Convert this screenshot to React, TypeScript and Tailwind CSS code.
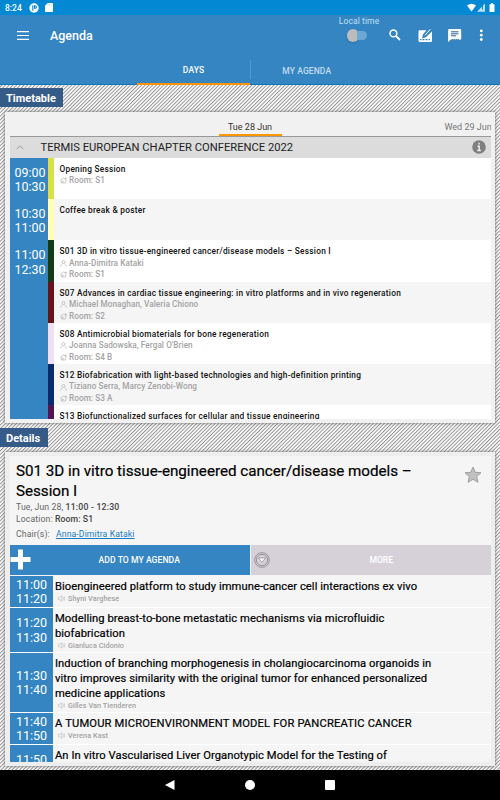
import type { ReactNode } from 'react'

type Session = {
  title: string
  color: string
  time?: [string, string]
  people?: string
  room?: string
}

type Talk = {
  time: [string, string]
  lines: string[]
  speaker?: string
  height: string
  tracking?: string
}

const sessions: Session[] = [
  { title: 'Opening Session', color: 'bg-[#d9e04d]', time: ['09:00', '10:30'], room: 'S1' },
  { title: 'Coffee break & poster', color: 'bg-[#ffffb8]', time: ['10:30', '11:00'] },
  {
    title: 'S01 3D in vitro tissue-engineered cancer/disease models – Session I',
    color: 'bg-[#163c17]',
    time: ['11:00', '12:30'],
    people: 'Anna-Dimitra Kataki',
    room: 'S1',
  },
  {
    title: 'S07 Advances in cardiac tissue engineering: in vitro platforms and in vivo regeneration',
    color: 'bg-[#65131d]',
    people: 'Michael Monaghan, Valeria Chiono',
    room: 'S2',
  },
  {
    title: 'S08 Antimicrobial biomaterials for bone regeneration',
    color: 'bg-[#efdff2]',
    people: "Joanna Sadowska, Fergal O'Brien",
    room: 'S4 B',
  },
  {
    title: 'S12 Biofabrication with light-based technologies and high-definition printing',
    color: 'bg-[#0b2c6b]',
    people: 'Tiziano Serra, Marcy Zenobi-Wong',
    room: 'S3 A',
  },
  {
    title: 'S13 Biofunctionalized surfaces for cellular and tissue engineering',
    color: 'bg-[#521452]',
  },
]

const talks: Talk[] = [
  {
    time: ['11:00', '11:20'],
    lines: ['Bioengineered platform to study immune-cancer cell interactions ex vivo'],
    speaker: 'Shyni Varghese',
    height: 'h-[32px]',
  },
  {
    time: ['11:20', '11:30'],
    lines: ['Modelling breast-to-bone metastatic mechanisms via microfluidic', 'biofabrication'],
    speaker: 'Gianluca Cidonio',
    height: 'h-[45px]',
  },
  {
    time: ['11:30', '11:40'],
    lines: [
      'Induction of branching morphogenesis in cholangiocarcinoma organoids in',
      'vitro improves similarity with the original tumor for enhanced personalized',
      'medicine applications',
    ],
    speaker: 'Gilles Van Tienderen',
    height: 'h-[60px]',
  },
  {
    time: ['11:40', '11:50'],
    lines: ['A TUMOUR MICROENVIRONMENT MODEL FOR PANCREATIC CANCER'],
    speaker: 'Verena Kast',
    height: 'h-[32px]',
    tracking: 'tracking-[0.160px]',
  },
  {
    time: ['11:50', '12:00'],
    lines: ['An In vitro Vascularised Liver Organotypic Model for the Testing of'],
    height: 'h-[44px]',
  },
]

function StatusBar() {
  return (
    <div className="flex h-[15px] items-center bg-[#0388d3] pl-[5px] text-white">
      <span className="pt-px text-[8.500px] font-medium leading-none">8:24</span>
      <svg className="ml-[7px]" width="10" height="10" viewBox="0 0 10 10">
        <circle cx="5" cy="5" r="4.700" fill="#fff" />
        <path d="M3.800 2.300v5.400M5.500 2.700h.6a1.300 1.300 0 0 1 0 2.600h-.6z" fill="none" stroke="#0388d3" strokeWidth="1.100" />
      </svg>
      <svg className="ml-[6px]" width="8" height="9" viewBox="0 0 8 9">
        <path d="M2.800 0H7.200q.8 0 .8.800v7.400q0 .8-.8.800H.8Q0 9 0 8.200V2.800z" fill="#fff" />
        <path d="M3 1v1.600M4.600 1v1.600M6.200 1v1.600" stroke="#9bd0ee" strokeWidth=".7" />
      </svg>
      <svg className="ml-auto mr-[5px]" width="28" height="10" viewBox="0 0 28 10">
        <path d="M0 2.500Q4.500-.8 9 2.500L4.500 8.500z" fill="#fff" />
        <path d="M18 .5v8.300H10z" fill="#fff" opacity=".75" />
        <path d="M15.500 3v3.500" stroke="#0388d3" strokeWidth="1" />
        <path d="M24 .3h2v1h1q.5 0 .5.500v6.600q0 .5-.5.500h-4q-.5 0-.5-.5V1.800q0-.5.5-.5h1z" fill="#fff" />
      </svg>
    </div>
  )
}

function AppBar() {
  return (
    <header className="flex h-[70px] flex-col border-b border-[#0c76bb] bg-[#3485c1] text-white">
      <div className="flex h-[40px] items-center">
        <svg className="ml-[16.500px] shrink-0" width="12" height="9" viewBox="0 0 12 9">
          <path d="M0 .7h12M0 4.500h12M0 8.300h12" stroke="#fff" strokeWidth="1.200" />
        </svg>
        <h1 className="ml-[21.500px] pt-[2px] text-[12.500px] font-medium leading-none">Agenda</h1>
        <div className="ml-auto mr-[9px] flex h-full w-[42px] flex-col items-center">
          <span className="mt-px whitespace-nowrap text-[8.500px] leading-[10px] tracking-[0.100px] text-[#bfe0f6]">Local time</span>
          <span className="mr-[4px] mt-[3px] flex h-[13px] w-[21px] items-center">
            <span className="h-[12.500px] w-[12.500px] shrink-0 rounded-full bg-[#bcbcbc] shadow-sm" />
            <span className="-ml-[2px] h-[9px] w-[10px] rounded-r-full bg-[#6ba8d5]" />
          </span>
        </div>
        <svg className="mr-[8px] shrink-0" width="103" height="16" viewBox="389 27 103 16">
          <circle cx="393.400" cy="33.400" r="3.400" fill="none" stroke="#fff" strokeWidth="1.500" />
          <path d="M396 36l4 4" stroke="#fff" strokeWidth="1.800" />
          <path d="M419.800 30.300h6.700l-3.600 4.200-.8 4 3.700-1.200 6.200-5.800v9.200q0 1.300-1.300 1.300h-10.900q-1.300 0-1.300-1.300v-9.100q0-1.300 1.300-1.300z" fill="#fff" />
          <path d="M423.800 36.700l6.300-7.200" stroke="#3485c1" strokeWidth="2.600" />
          <path d="M425 35.300l5.300-6" stroke="#fff" strokeWidth="1" />
          <path d="M420 39.700h10.500" stroke="#3485c1" strokeWidth="1.200" strokeDasharray="1 .5" />
          <path d="M449.300 29h10.700q1.200 0 1.200 1.200v8.600q0 1-1.200 1h-9.500l-2.400 2.400V30.200q0-1.200 1.200-1.200z" fill="#fff" />
          <path d="M451 31.800h7.500M451 33.800h7.500M451 35.800h5.200" stroke="#24629a" strokeWidth="1" />
          <path d="M451.500 40h8" stroke="#4284b8" strokeWidth="1.800" strokeDasharray="1.500 .5" />
          <circle cx="481.300" cy="30.900" r="1.400" fill="#fff" />
          <circle cx="481.300" cy="35.200" r="1.400" fill="#fff" />
          <circle cx="481.300" cy="39.500" r="1.400" fill="#fff" />
        </svg>
      </div>
      <nav className="flex flex-1 justify-center text-[8.500px] font-medium leading-none tracking-[0.100px]">
        <div className="-mb-px flex w-[112.500px] items-center justify-center border-b-2 border-[#ff9305] pt-[3px]">DAYS</div>
        <div className="my-[5px] w-px bg-[#5498ca]" />
        <div className="flex w-[112px] items-center justify-center pt-[3px] text-[#c2dcf0]">MY AGENDA</div>
      </nav>
    </header>
  )
}

function SectionLabel({ className, children }: { className: string; children: ReactNode }) {
  return (
    <h2 className={`flex h-[19px] items-center bg-[#355c89] pl-[6px] pt-px text-[11px] font-bold leading-none text-white ${className}`}>
      {children}
    </h2>
  )
}

function PersonIcon() {
  return (
    <svg className="mr-[2.500px] shrink-0" width="7" height="7" viewBox="0 0 7 7">
      <circle cx="3.500" cy="2" r="1.500" fill="none" stroke="#aaa" strokeWidth=".6" />
      <path d="M.5 6.600q.3-1.700 2.100-3M6.500 6.600Q6.200 4.900 4.400 3.600" fill="none" stroke="#aaa" strokeWidth=".6" />
    </svg>
  )
}

function HomeIcon() {
  return (
    <svg className="mr-[2.500px] shrink-0" width="7" height="7" viewBox="0 0 7 7">
      <path d="M.3 3.400L3.300 1l3.300 1.800M1.200 3l.3 3h4l.4-3M2.700 5.800V4.200h1.300M5.300 1.900V.9h.9v1.400" fill="none" stroke="#aaa" strokeWidth=".6" />
    </svg>
  )
}

function SpeakerIcon() {
  return (
    <svg className="mr-[3px] shrink-0" width="7" height="7" viewBox="0 0 7 7">
      <path d="M.5 2.300h1.300L3.800.7v5.600l-2-1.600H.5zM5 2.300q.7 1.200 0 2.400M6 1.200q1.200 2.300 0 4.600" fill="none" stroke="#aaa" strokeWidth=".5" />
    </svg>
  )
}

function SessionRow({ session, even }: { session: Session; even: boolean }) {
  return (
    <div className="flex h-[41.200px] shrink-0">
      <div className="w-[38.500px] pl-[5px] pt-[7.500px] text-[12.500px] leading-[14.700px] text-white">
        {session.time?.map((t) => <div key={t}>{t}</div>)}
      </div>
      <div className={`w-[6px] ${session.color}`} />
      <div className={`flex-1 whitespace-nowrap pl-[5.500px] pt-[6px] ${even ? 'bg-white' : 'bg-[#f5f5f5]'}`}>
        <div className="text-[8.300px] font-medium leading-[11px] tracking-[0.250px] text-[#111]">{session.title}</div>
        {session.people && (
          <div className="mt-[0.500px] flex items-center text-[8.200px] font-medium leading-[11.200px] tracking-[0.070px] text-[#a3a3a3]">
            <PersonIcon />
            {session.people}
          </div>
        )}
        {session.room && (
          <div className="mt-[0.300px] flex items-center text-[8.200px] font-medium leading-[11.200px] tracking-[0.070px] text-[#a3a3a3]">
            <HomeIcon />
            Room: {session.room}
          </div>
        )}
      </div>
    </div>
  )
}

function Timetable() {
  return (
    <section className="mx-[5px] mt-[5px] h-[311px] bg-[#f1f1f1] px-[4.500px] pb-[4px] shadow-[0_0_3px_#666]">
      <div className="flex h-full flex-col overflow-hidden">
        <div className="flex h-[24.500px] shrink-0 items-end justify-between border-b border-[#999] text-[9px] leading-none">
          <div className="w-[46px]" />
          <div className="flex h-[15px] w-[63px] justify-center border-b-2 border-[#ff9800] pt-[2px] text-[#333]">Tue 28 Jun</div>
          <div className="h-[13px] w-[46px] whitespace-nowrap text-right text-[#777]">Wed 29 Jun</div>
        </div>
        <div className="flex h-[21.500px] shrink-0 items-center bg-[#dcdcdc] pl-[6px] pr-[5px]">
          <svg width="8" height="5" viewBox="0 0 8 5">
            <path d="M.6 4L4 .9 7.400 4" fill="none" stroke="#999" strokeWidth=".9" />
          </svg>
          <span className="ml-[17px] pt-px text-[11.200px] leading-none text-[#222]">TERMIS EUROPEAN CHAPTER CONFERENCE 2022</span>
          <svg className="ml-auto" width="14" height="14" viewBox="0 0 14 14">
            <circle cx="7" cy="7" r="6.800" fill="#7f7f7f" />
            <path d="M5.500 6.200h1.700v4.300M5.200 10.500h3.700M7 2.800v1.700" fill="none" stroke="#eee" strokeWidth="1.500" />
          </svg>
        </div>
        <div className="flex-1 overflow-hidden bg-[#3485c1]">
          {sessions.map((s, i) => (
            <SessionRow key={s.title} session={s} even={i % 2 === 0} />
          ))}
        </div>
      </div>
    </section>
  )
}

function TalkRow({ talk }: { talk: Talk }) {
  return (
    <div className={`flex shrink-0 border-b border-white ${talk.height}`}>
      <div className="flex w-[43.500px] flex-col justify-center bg-[#3485c1] pl-[6.500px] pt-[2.500px] text-[12.500px] leading-[14.700px] text-white">
        {talk.time.map((t) => <div key={t}>{t}</div>)}
      </div>
      <div className={`whitespace-nowrap pl-[2px] pt-[3px] ${talk.tracking ?? 'tracking-[0.060px]'}`}>
        {talk.lines.map((line) => (
          <div key={line} className="text-[11.200px] leading-[15px] text-black [-webkit-text-stroke:0.200px_#000]">{line}</div>
        ))}
        {talk.speaker && (
          <div className="flex items-center pl-[3px] text-[7.300px] font-medium leading-[10px] tracking-[0.050px] text-[#a3a3a3]">
            <SpeakerIcon />
            {talk.speaker}
          </div>
        )}
      </div>
    </div>
  )
}

function Details() {
  return (
    <section className="mx-[5px] mt-[5px] h-[314px] bg-[#eee] px-[4.500px] pb-[4px] pt-[4px] shadow-[0_0_3px_#666]">
      <div className="flex h-full flex-col overflow-hidden bg-[#f5f5f5]">
        <div className="flex h-[89px] shrink-0 pl-[6.500px] pr-[9px] text-[8.700px] tracking-[0.100px] text-[#666]">
          <div className="flex-1">
            <h3 className="mt-[6px] text-[15.200px] leading-[19.700px] tracking-[-0.020px] text-black [-webkit-text-stroke:0.200px_#000]">
              S01 3D in vitro tissue-engineered cancer/disease models –<br />Session I
            </h3>
            <div className="leading-[12px]">Tue, Jun 28, <span className="font-medium tracking-[0.200px] text-[#444]">11:00 - 12:30</span></div>
            <div className="leading-[12px]">Location: <span className="font-medium text-[#444]">Room: S1</span></div>
            <div className="mt-[3px] leading-[12px]">Chair(s): <span className="ml-[4px] text-[#1c7cc4] underline">Anna-Dimitra Kataki</span></div>
          </div>
          <svg className="mt-[9.500px] shrink-0" width="18" height="18" viewBox="0 0 18 18">
            <path d="M9 1l2.300 5.300 5.700.5-4.300 3.800 1.300 5.700L9 13.300l-5 3 1.300-5.700L1 6.800l5.700-.5z" fill="#c0c0c0" stroke="#999" strokeWidth=".9" strokeLinejoin="round" />
          </svg>
        </div>
        <div className="mb-[1px] flex h-[29.500px] shrink-0 gap-[1.500px] text-[8.600px] font-medium leading-none text-white">
          <div className="flex w-[240px] items-center bg-[#3485c1]">
            <svg className="ml-[0.500px]" width="21" height="21" viewBox="0 0 21 21">
              <path d="M10.500 .5v20M.5 10.500h20" stroke="#fff" strokeWidth="5" />
            </svg>
            <span className="flex-1 pr-[2px] pt-[2px] text-center tracking-[0.050px]">ADD TO MY AGENDA</span>
          </div>
          <div className="flex flex-1 items-center bg-[#d6d1d9]">
            <svg className="ml-[3px]" width="16" height="16" viewBox="0 0 16 16">
              <circle cx="8" cy="8" r="7.300" fill="none" stroke="#777" strokeWidth=".7" />
              <circle cx="8" cy="8" r="5.600" fill="none" stroke="#777" strokeWidth=".7" />
              <path d="M4.500 6h7L8 10.300z" fill="#fff" stroke="#777" strokeWidth=".6" />
            </svg>
            <span className="flex-1 pl-[2px] pt-[2px] text-center">MORE</span>
          </div>
        </div>
        {talks.map((t) => <TalkRow key={t.lines[0]} talk={t} />)}
      </div>
    </section>
  )
}

function NavBar() {
  return (
    <footer className="mt-auto flex h-[30px] items-center justify-center gap-[70px] bg-black">
      <svg width="10" height="10" viewBox="0 0 10 10">
        <path d="M9.500 0v10L0 5z" fill="#fff" />
      </svg>
      <span className="h-[10px] w-[10px] rounded-full bg-white" />
      <span className="h-[10px] w-[10px] rounded-[1px] bg-white" />
    </footer>
  )
}

export default function App() {
  return (
    <div className="flex h-[800px] w-[500px] flex-col overflow-hidden bg-[repeating-linear-gradient(135deg,#f6f6f6_0px,#f6f6f6_0.900px,#909090_1.700px,#f6f6f6_2.600px)] font-[Roboto,sans-serif]">
      <StatusBar />
      <AppBar />
      <SectionLabel className="mt-[3px] w-[63px]">Timetable</SectionLabel>
      <Timetable />
      <SectionLabel className="mt-[5px] w-[48px]">Details</SectionLabel>
      <Details />
      <NavBar />
    </div>
  )
}
